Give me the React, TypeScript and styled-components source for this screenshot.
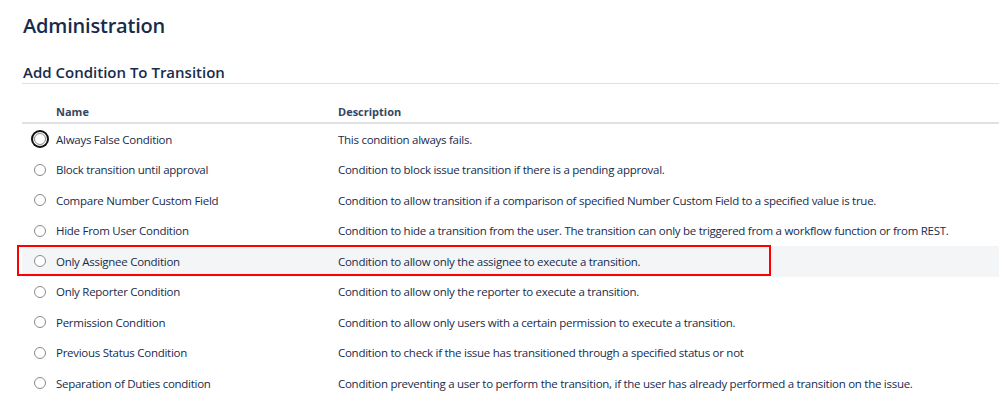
import React, { useState } from "react";
import styled, { createGlobalStyle } from "styled-components";

const GlobalStyle = createGlobalStyle`
  html, body {
    margin: 0;
    padding: 0;
    background: #ffffff;
    overflow: hidden;
  }
  body {
    font-family: "Open Sans", "Noto Sans", "Liberation Sans", sans-serif;
    color: #172b4d;
  }
`;

const Page = styled.div`
  width: 999px;
  height: 400px;
  padding: 12px 0 0 22px;
  box-sizing: border-box;
`;

const PageTitle = styled.h1`
  margin: 0 0 0 1px;
  font-size: 20px;
  line-height: 28px;
  font-weight: 600;
  letter-spacing: -0.2px;
  color: #172b4d;
`;

const SectionTitle = styled.h2`
  margin: 22px 0 0 0;
  padding: 0 0 1px 1px;
  font-size: 15px;
  line-height: 20px;
  font-weight: 600;
  color: #172b4d;
  border-bottom: 1px solid #dfe1e6;
`;

const Table = styled.div`
  margin-top: 17px;
  display: flex;
  flex-direction: column;
`;

const HeaderRow = styled.div`
  display: grid;
  grid-template-columns: 34px 282px 1fr;
  align-items: center;
  height: 21px;
  border-bottom: 2px solid #dfe1e6;
`;

const HeaderCell = styled.div`
  font-size: 11px;
  font-weight: 700;
  color: #344563;
`;

const Row = styled.label<{ highlighted?: boolean }>`
  position: relative;
  display: grid;
  grid-template-columns: 34px 282px 1fr;
  align-items: center;
  height: 30.5px;
  background: ${(p) => (p.highlighted ? "#f4f5f7" : "transparent")};
  cursor: pointer;
`;

const RadioCell = styled.div`
  display: flex;
  justify-content: flex-end;
  padding-right: 10px;
`;

const Radio = styled.span<{ focused?: boolean }>`
  box-sizing: border-box;
  width: 12px;
  height: 12px;
  border-radius: 50%;
  border: 1px solid #8a8a8a;
  background: #ffffff;
  box-shadow: ${(p) =>
    p.focused ? "0 0 0 1px #ffffff, 0 0 0 3px #101010" : "none"};
  input {
    display: none;
  }
`;

const Cell = styled.div`
  font-size: 11.5px;
  letter-spacing: -0.27px;
  color: #172b4d;
  white-space: nowrap;
`;

const Annotation = styled.div`
  position: absolute;
  left: -5px;
  top: -1px;
  width: 754px;
  height: 31px;
  box-sizing: border-box;
  border: 2px solid #ff0000;
  pointer-events: none;
`;

type Condition = { name: string; description: string };

const conditions: Condition[] = [
  { name: "Always False Condition", description: "This condition always fails." },
  {
    name: "Block transition until approval",
    description: "Condition to block issue transition if there is a pending approval.",
  },
  {
    name: "Compare Number Custom Field",
    description:
      "Condition to allow transition if a comparison of specified Number Custom Field to a specified value is true.",
  },
  {
    name: "Hide From User Condition",
    description:
      "Condition to hide a transition from the user. The transition can only be triggered from a workflow function or from REST.",
  },
  {
    name: "Only Assignee Condition",
    description: "Condition to allow only the assignee to execute a transition.",
  },
  {
    name: "Only Reporter Condition",
    description: "Condition to allow only the reporter to execute a transition.",
  },
  {
    name: "Permission Condition",
    description:
      "Condition to allow only users with a certain permission to execute a transition.",
  },
  {
    name: "Previous Status Condition",
    description:
      "Condition to check if the issue has transitioned through a specified status or not",
  },
  {
    name: "Separation of Duties condition",
    description:
      "Condition preventing a user to perform the transition, if the user has already performed a transition on the issue.",
  },
];

const App = () => {
  const [selected, setSelected] = useState("");

  return (
    <Page>
      <GlobalStyle />
      <PageTitle>Administration</PageTitle>
      <SectionTitle>Add Condition To Transition</SectionTitle>
      <Table>
        <HeaderRow>
          <div />
          <HeaderCell>Name</HeaderCell>
          <HeaderCell>Description</HeaderCell>
        </HeaderRow>
        {conditions.map((c, index) => (
          <Row key={c.name} highlighted={index === 4}>
            <RadioCell>
              <Radio focused={index === 0}>
                <input
                  type="radio"
                  name="condition"
                  value={c.name}
                  checked={selected === c.name}
                  onChange={(e) => setSelected(e.currentTarget.value)}
                />
              </Radio>
            </RadioCell>
            <Cell>{c.name}</Cell>
            <Cell>{c.description}</Cell>
            {index === 4 && <Annotation />}
          </Row>
        ))}
      </Table>
    </Page>
  );
};

export default App;
